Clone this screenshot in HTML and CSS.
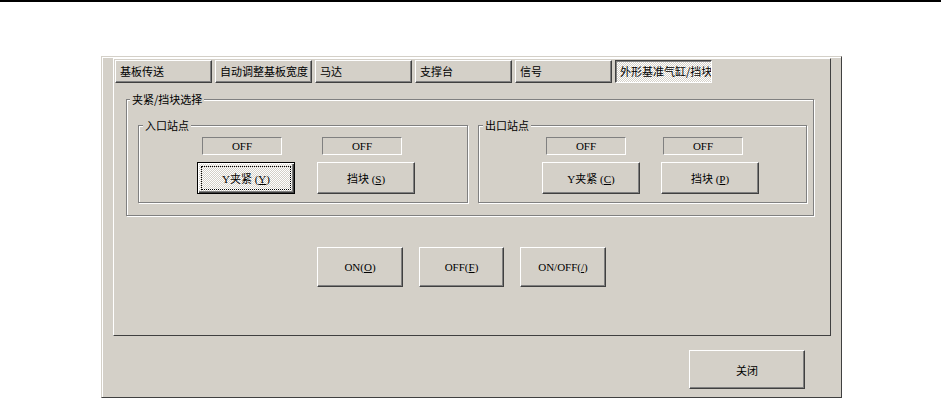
FILE: index.html
```html
<!DOCTYPE html>
<html lang="zh-CN">
<head>
    <meta charset="UTF-8">
    <title>外形基准气缸/挡块</title>
    <link rel="stylesheet" href="styles.css">
</head>
<body>
    <div class="dialog">
        <div class="panel">
            <div class="tabs">
                <div class="tab">基板传送</div>
                <div class="tab">自动调整基板宽度</div>
                <div class="tab">马达</div>
                <div class="tab">支撑台</div>
                <div class="tab">信号</div>
                <div class="tab active">外形基准气缸/挡块</div>
            </div>

            <div class="group group-main">
                <div class="group-title">夹紧/挡块选择</div>
                <div class="stations">
                    <div class="group station station-in">
                        <div class="group-title">入口站点</div>
                        <div class="status-row">
                            <div class="status">OFF</div>
                            <div class="status">OFF</div>
                        </div>
                        <div class="button-row">
                            <button class="btn btn-default">Y夹紧 (<u>Y</u>)</button>
                            <button class="btn">挡块 (<u>S</u>)</button>
                        </div>
                    </div>
                    <div class="group station station-out">
                        <div class="group-title">出口站点</div>
                        <div class="status-row">
                            <div class="status">OFF</div>
                            <div class="status">OFF</div>
                        </div>
                        <div class="button-row">
                            <button class="btn">Y夹紧 (<u>C</u>)</button>
                            <button class="btn">挡块 (<u>P</u>)</button>
                        </div>
                    </div>
                </div>
            </div>

            <div class="switch-row">
                <button class="btn btn-switch">ON(<u>O</u>)</button>
                <button class="btn btn-switch">OFF(<u>F</u>)</button>
                <button class="btn btn-switch">ON/OFF(<u>/</u>)</button>
            </div>
        </div>

        <div class="footer">
            <button class="btn btn-close">关闭</button>
        </div>
    </div>
</body>
</html>
```

FILE: styles.css
```css
body {
    margin: 0;
    padding: 0;
    background: #fff;
    border-top: 2px solid #000;
    font-family: "Liberation Serif", "Noto Sans CJK SC", serif;
    font-size: 11px;
    color: #000;
}
.dialog {
    box-sizing: border-box;
    width: 741px;
    height: 342px;
    margin: 54px 0 0 101px;
    padding: 1px 0 0 11px;
    background: #d4d0c8;
    border: 1px solid;
    border-color: #d4d0c8 #404040 #404040 #d4d0c8;
    box-shadow: inset 1px 1px 0 #fff;
}
.panel {
    box-sizing: border-box;
    width: 718px;
    height: 278px;
    border: 1px solid;
    border-color: #fff #404040 #404040 #fff;
}
.tabs {
    display: flex;
    gap: 3px;
    padding: 1px 0 0 1px;
}
.tab {
    box-sizing: border-box;
    width: 97px;
    height: 23px;
    padding-left: 4px;
    line-height: 21px;
    white-space: nowrap;
    overflow: hidden;
    font-family: "Noto Sans CJK SC", sans-serif;
    border: 1px solid;
    border-color: #fff #404040 #404040 #fff;
    box-shadow: inset -1px -1px 0 #808080;
}
.tab.active {
    border-color: #404040 #fff #fff #404040;
    box-shadow: inset 1px 1px 0 #808080;
    background: repeating-conic-gradient(#fff 0 25%, #d4d0c8 0 50%) 0 0 / 2px 2px;
}
.group {
    box-sizing: border-box;
    border: 1px solid #808080;
    box-shadow: 1px 1px 0 #fff, inset 1px 1px 0 #fff;
}
.group-title {
    display: table;
    margin: -7px 0 0 4px;
    padding: 0 2px;
    line-height: 12px;
    background: #d4d0c8;
    font-family: "Noto Sans CJK SC", sans-serif;
}
.group-main {
    width: 688px;
    height: 117px;
    margin: 16px 0 0 12px;
}
.group-main > .group-title {
    margin-left: 3px;
}
.stations {
    display: flex;
    gap: 10px;
    margin-top: 20px;
    padding-left: 11px;
}
.station {
    width: 330px;
    height: 78px;
}
.station-out {
    width: 329px;
}
.status-row {
    display: flex;
    gap: 40px;
    margin-top: 6px;
    padding-left: 63px;
}
.button-row {
    display: flex;
    gap: 22px;
    margin-top: 7px;
    padding-left: 58px;
}
.station-out .status-row {
    gap: 37px;
    padding-left: 67px;
}
.station-out .button-row {
    gap: 21px;
    padding-left: 63px;
}
.status {
    box-sizing: border-box;
    width: 80px;
    height: 18px;
    line-height: 16px;
    text-align: center;
    border: 1px solid;
    border-color: #808080 #fff #fff #808080;
}
.btn {
    box-sizing: border-box;
    width: 98px;
    height: 32px;
    margin: 0;
    padding: 0;
    font: inherit;
    color: #000;
    background: #d4d0c8;
    border: 1px solid;
    border-color: #fff #404040 #404040 #fff;
    box-shadow: inset -1px -1px 0 #808080;
    white-space: nowrap;
    cursor: pointer;
}
.btn-default {
    border-color: #000;
    box-shadow: inset 1px 1px 0 #fff, inset -1px -1px 0 #404040, inset -2px -2px 0 #808080;
    outline: 1px dotted #000;
    outline-offset: -5px;
    background: repeating-conic-gradient(#fff 0 25%, #d4d0c8 0 50%) 0 0 / 2px 2px;
}
.switch-row {
    display: flex;
    gap: 16px;
    margin-top: 31px;
    padding-left: 203px;
}
.btn-switch {
    width: 86px;
    height: 40px;
}
.btn-switch:nth-child(2) {
    width: 85px;
}
.footer {
    display: flex;
    justify-content: flex-end;
    margin-top: 14px;
    padding-right: 36px;
}
.btn-close {
    width: 116px;
    height: 39px;
}
```
